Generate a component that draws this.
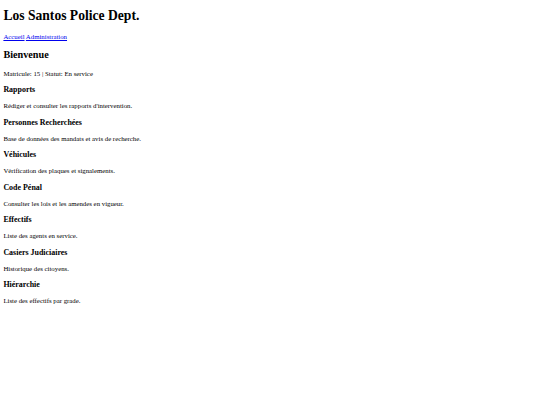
import React from 'react';

const sections = [
  { title: 'Rapports', text: "Rédiger et consulter les rapports d'intervention." },
  { title: 'Personnes Recherchées', text: 'Base de données des mandats et avis de recherche.' },
  { title: 'Véhicules', text: 'Vérification des plaques et signalements.' },
  { title: 'Code Pénal', text: 'Consulter les lois et les amendes en vigueur.' },
  { title: 'Effectifs', text: 'Liste des agents en service.' },
  { title: 'Casiers Judiciaires', text: 'Historique des citoyens.' },
  { title: 'Hiérarchie', text: 'Liste des effectifs par grade.' },
];

export default function App() {
  return (
    <div className="m-[3.4px] font-['Liberation_Serif',serif] text-[6.8px] leading-[1.16] text-black">
      <h1 className="mt-[0.6em] mb-[0.67em] text-[2em] font-bold">Los Santos Police Dept.</h1>
      <nav>
        <a href="#" className="text-[#0000ee] underline">Accueil</a>{' '}
        <a href="#" className="text-[#0000ee] underline">Administration</a>
      </nav>
      <h2 className="my-[0.83em] text-[1.5em] font-bold">Bienvenue</h2>
      <p className="my-[1em]">Matricule: 15 | Statut: En service</p>
      {sections.map((s) => (
        <div key={s.title}>
          <h3 className="my-[0.97em] text-[1.17em] font-bold">{s.title}</h3>
          <p className="my-[1em]">{s.text}</p>
        </div>
      ))}
    </div>
  );
}
